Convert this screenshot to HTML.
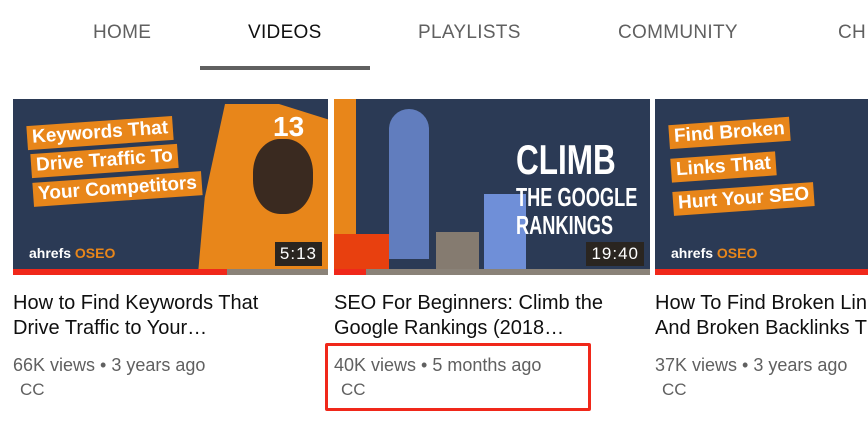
<html><head><style>
body{margin:0;width:868px;height:421px;overflow:hidden;background:#fff;font-family:"Liberation Sans",sans-serif;position:relative}
.t{position:absolute;top:22px;font-size:19px;color:#606060;letter-spacing:0.3px;font-weight:500}
.th{position:absolute;top:99px;height:176px;background:#2b3a55;overflow:hidden}
.bar{position:absolute;bottom:0;left:0;right:0;height:6px;background:#8a8278}
.red{position:absolute;bottom:0;left:0;height:6px;background:#f0281a}
.dur{position:absolute;right:6px;bottom:9px;background:#2a2520;color:#fff;font-size:17px;padding:2px 5px;letter-spacing:1px}
.lab{position:absolute;background:#e8861a;color:#fff;font-weight:bold;font-size:19px;padding:1px 5px;transform:rotate(-4deg);white-space:nowrap}
.logo{position:absolute;left:16px;bottom:14px;color:#fff;font-size:14px;font-weight:bold}
.logo b{color:#e8861a}
.title{position:absolute;top:291px;font-size:20px;line-height:25px;color:#0f0f0f;white-space:nowrap}
.meta{position:absolute;top:355px;font-size:18px;color:#606060;white-space:nowrap}
.cc{position:absolute;top:380px;font-size:17px;color:#606060}
</style></head><body>
<div class="t" style="left:93px">HOME</div>
<div class="t" style="left:248px;color:#0f0f0f">VIDEOS</div>
<div class="t" style="left:418px">PLAYLISTS</div>
<div class="t" style="left:618px">COMMUNITY</div>
<div class="t" style="left:838px">CH</div>
<div style="position:absolute;left:200px;top:66px;width:170px;height:4px;background:#606060"></div>

<div class="th" style="left:13px;width:315px">
<div style="position:absolute;left:185px;top:5px;width:135px;height:170px;background:#e8861a;clip-path:polygon(20% 0,60% 0,100% 10%,100% 100%,0 100%,5% 55%)"></div>
<div style="position:absolute;left:240px;top:40px;width:60px;height:75px;border-radius:45%;background:#3a2a20"></div>
<div class="lab" style="left:14px;top:22px">Keywords That</div>
<div class="lab" style="left:18px;top:50px">Drive Traffic To</div>
<div class="lab" style="left:20px;top:78px">Your Competitors</div>
<div style="position:absolute;left:260px;top:12px;color:#fff;font-size:28px;font-weight:bold">13</div>
<div class="logo">ahrefs <b>OSEO</b></div>
<div class="dur">5:13</div>
<div class="bar"></div><div class="red" style="width:214px"></div>
</div>

<div class="th" style="left:334px;width:316px">
<div style="position:absolute;left:0;top:0;width:22px;height:176px;background:#e8861a"></div>
<div style="position:absolute;left:55px;top:10px;width:40px;height:150px;background:#6f8fd8;border-radius:20px 20px 0 0;opacity:.8"></div>
<div style="position:absolute;left:0;top:135px;width:55px;height:41px;background:#e8400f"></div>
<div style="position:absolute;left:102px;top:133px;width:43px;height:43px;background:#857b70"></div>
<div style="position:absolute;left:150px;top:95px;width:42px;height:81px;background:#6f8fd8"></div>
<div style="position:absolute;left:182px;top:40px;color:#fff;font-weight:bold;font-size:42px;line-height:42px;transform:scaleX(.75);transform-origin:left">CLIMB</div>
<div style="position:absolute;left:182px;top:84px;color:#fff;font-weight:bold;font-size:26px;line-height:28px;transform:scaleX(.7);transform-origin:left;white-space:nowrap">THE GOOGLE<br>RANKINGS</div>
<div class="dur">19:40</div>
<div class="bar"></div><div class="red" style="width:32px"></div>
</div>

<div class="th" style="left:655px;width:220px">
<div class="lab" style="left:14px;top:22px">Find Broken</div>
<div class="lab" style="left:16px;top:56px">Links That</div>
<div class="lab" style="left:18px;top:88px">Hurt Your SEO</div>
<div class="logo">ahrefs <b>OSEO</b></div>
<div class="bar"></div><div class="red" style="width:220px"></div>
</div>

<div class="title" style="left:13px">How to Find Keywords That<br>Drive Traffic to Your…</div>
<div class="title" style="left:334px">SEO For Beginners: Climb the<br>Google Rankings (2018…</div>
<div class="title" style="left:655px">How To Find Broken Lin<br>And Broken Backlinks T</div>
<div class="meta" style="left:13px">66K views • 3 years ago</div>
<div class="meta" style="left:334px">40K views • 5 months ago</div>
<div class="meta" style="left:655px">37K views • 3 years ago</div>
<div class="cc" style="left:20px">CC</div>
<div class="cc" style="left:341px">CC</div>
<div class="cc" style="left:662px">CC</div>
<div style="position:absolute;left:325px;top:343px;width:260px;height:62px;border:3px solid #f0281a;border-radius:2px"></div>
</body></html>
